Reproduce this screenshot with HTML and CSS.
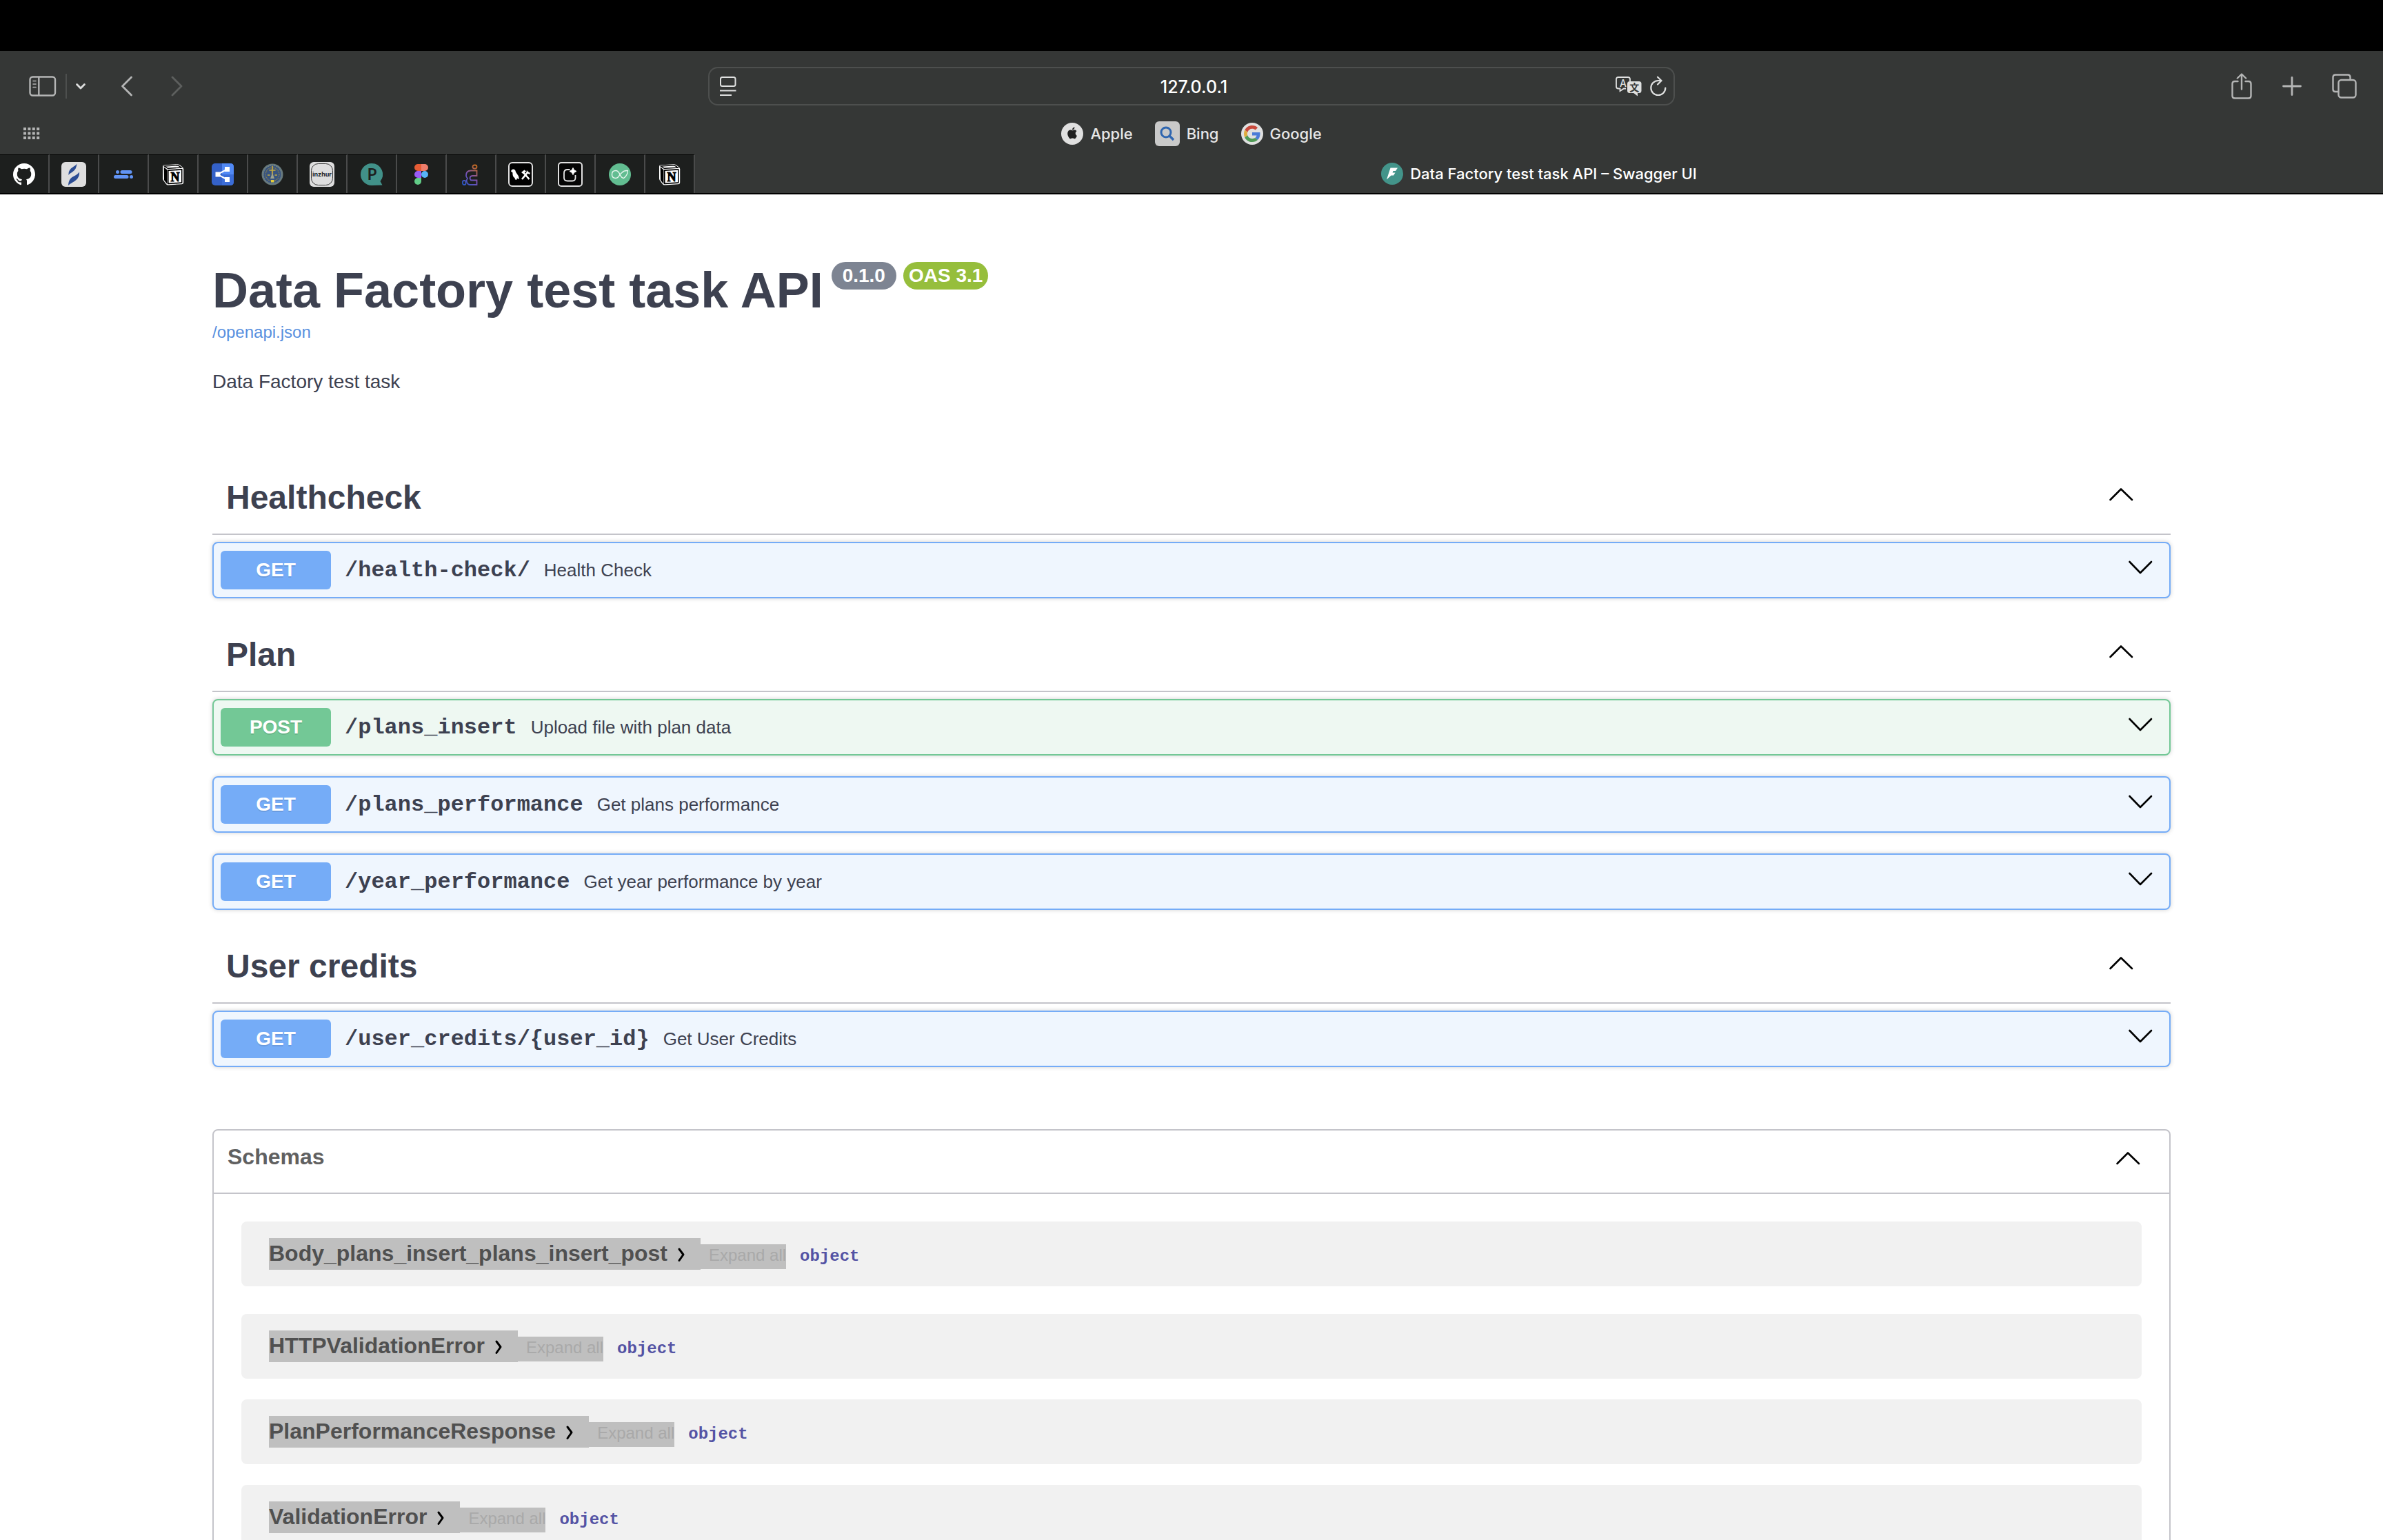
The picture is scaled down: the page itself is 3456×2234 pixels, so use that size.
FILE: index.html
```html
<!DOCTYPE html>
<html lang="en">
<head>
<meta charset="utf-8">
<title>Data Factory test task API - Swagger UI</title>
<link rel="stylesheet" href="styles.css">
</head>
<body>
<svg class="defs" aria-hidden="true">
  <symbol id="up" viewBox="0 0 40 40"><path d="M4.500 23 20 7.500 36 23" fill="none" stroke="#000" stroke-width="2.600" stroke-linecap="round" stroke-linejoin="round"/></symbol>
  <symbol id="down" viewBox="0 0 40 40"><path d="M4.500 8 20 24 36 8" fill="none" stroke="#000" stroke-width="2.600" stroke-linecap="round" stroke-linejoin="round"/></symbol>
  <symbol id="right" viewBox="0 0 48 46"><path d="M17 16 23 24 17 32.500" fill="none" stroke="#000" stroke-width="3" stroke-linecap="round" stroke-linejoin="round"/></symbol>
  <symbol id="notion" viewBox="0 0 32 32">
    <path d="M2.500 2.500 22 1.300q2 0 3.500 1l4.500 3.400q1.200 1 1.200 2.500v19.500q0 2.300-2.300 2.500L9 31.500q-2 0-3.200-1.500L1.800 24.500Q1 23.300 1 22V4.500q0-1.800 1.500-2z" fill="#fff"/>
    <path d="M3.500 4 21.500 2.800q1.700-.1 3 .8l3.500 2.500-18.800 1.100q-1.300.1-2.300-.8z" fill="#fff" stroke="#000" stroke-width="1.400"/>
    <path d="M2.700 5.500 7 9v20.500l-4-5.300zM7.500 9.200l22-1.300v19.800q0 1.300-1.300 1.400L9 30.200q-1.500 0-1.500-1.500z" fill="#000"/>
    <path d="M9.600 11 28 9.800v17.500L9.600 28.500z" fill="#fff"/>
  </symbol>
</svg>

<div class="window">
<header class="chrome">
  <div class="toolbar">
    <div class="tools">
      <button class="icon-btn" aria-label="Sidebar"><svg width="40" height="30" viewBox="0 0 40 30" fill="none" stroke="#b4b5b5" stroke-width="2.400"><rect x="1.500" y="1.500" width="36.500" height="27" rx="4"/><path d="M14.300 2v26"/><path d="M6 7.500h4M6 12h4M6 16.500h4" stroke-width="1.600" stroke-linecap="round"/></svg></button>
      <span class="divider"></span>
      <button class="icon-btn" aria-label="Tab groups"><svg width="14" height="36" viewBox="0 0 14 36" fill="none" stroke="#dcdddd" stroke-width="2.800" stroke-linecap="round" stroke-linejoin="round"><path d="M1.600 15.500 7 21l5.400-5.500"/></svg></button>
      <button class="icon-btn back" aria-label="Back"><svg width="18" height="30" viewBox="0 0 18 30" fill="none" stroke="#b4b5b5" stroke-width="2.800" stroke-linecap="round" stroke-linejoin="round"><path d="M15.500 2 2.500 15l13 13"/></svg></button>
      <button class="icon-btn forward" aria-label="Forward"><svg width="18" height="30" viewBox="0 0 18 30" fill="none" stroke="#5d5f5e" stroke-width="2.800" stroke-linecap="round" stroke-linejoin="round"><path d="M2 2l13 13L2 28"/></svg></button>
    </div>
    <div class="address">
      <svg width="24" height="30" viewBox="0 0 24 30" fill="none" stroke="#dfe0e0" stroke-width="2"><rect x="1" y="2" width="21.500" height="13" rx="2.500"/><path d="M0 21.500h23.500M0 28h17"/></svg>
      <input type="text" value="127.0.0.1" aria-label="Address">
      <button class="icon-btn" aria-label="Translate"><svg width="38" height="30" viewBox="0 0 38 30"><path d="M15 18.500h-3L6.500 22v-3.500H4Q1 18.500 1 15.500V5q0-3 3-3h14q3 0 3 3v3" fill="none" stroke="#dfe0e0" stroke-width="1.800"/><rect x="17" y="8" width="20.500" height="17" rx="3.500" fill="#dfe0e0"/><path d="M25 24h7v5.500z" fill="#dfe0e0"/><text x="11" y="15.500" font-family="Inter, sans-serif" font-size="14" text-anchor="middle" fill="#dfe0e0">A</text><text x="27.200" y="22" font-family="Noto Sans CJK SC, sans-serif" font-weight="700" font-size="14" text-anchor="middle" fill="#353736">文</text></svg></button>
      <button class="icon-btn" aria-label="Reload"><svg width="24" height="30" viewBox="0 0 24 30" fill="none" stroke="#dfe0e0" stroke-width="2.200" stroke-linecap="round" stroke-linejoin="round"><path d="M22.300 17.500A10.500 10.500 0 1 1 11.800 7h4.500"/><path d="m11 1.700 5.500 5.300-5.500 5.500"/></svg></button>
    </div>
    <div class="actions">
      <button class="icon-btn" aria-label="Share"><svg width="30" height="38" viewBox="0 0 30 38" fill="none" stroke="#b4b5b5" stroke-width="2.400" stroke-linecap="round" stroke-linejoin="round"><path d="M9.500 12H5q-3.500 0-3.500 3.500v17.500q0 3.500 3.500 3.500h20q3.500 0 3.500-3.500V15.500q0-3.500-3.500-3.500h-4.500M15 23.500V2M8.800 7.500 15 1.500l6.200 6"/></svg></button>
      <button class="icon-btn" aria-label="New tab"><svg width="28" height="28" viewBox="0 0 28 28" stroke="#b4b5b5" stroke-width="2.800" stroke-linecap="round"><path d="M14 1.500v25M1.500 14h25"/></svg></button>
      <button class="icon-btn" aria-label="Tab overview"><svg width="36" height="36" viewBox="0 0 36 36" fill="none" stroke="#b4b5b5" stroke-width="2.400"><rect x="9.500" y="9" width="25" height="25.500" rx="4"/><path d="M9 26H5q-3.500 0-3.500-3.500V5Q1.500 1.500 5 1.500h18q3.500 0 3.500 3.500v3"/></svg></button>
    </div>
  </div>

  <nav class="bookmarks" aria-label="Favourites">
    <button class="icon-btn grid-btn" aria-label="All favourites"><svg width="24" height="18" viewBox="0 0 24 18" fill="#b4b5b5"><path d="M0 0h4v4H0zM6.400 0h4v4h-4zM12.800 0h4v4h-4zM19.200 0h4v4h-4zM0 6.500h4v4H0zM6.400 6.500h4v4h-4zM12.800 6.500h4v4h-4zM19.200 6.500h4v4h-4zM0 13h4v4H0zM6.400 13h4v4h-4zM12.800 13h4v4h-4zM19.200 13h4v4h-4z"/></svg></button>
    <div class="marks">
      <a href="#apple"><svg width="32" height="32" viewBox="0 0 32 32"><circle cx="16" cy="16" r="16" fill="#e0e0e0"/><path transform="translate(7.700 6.500) scale(.7)" fill="#1f1f1f" d="M12.152 6.896c-.948 0-2.415-1.078-3.960-1.040-2.040.027-3.910 1.183-4.961 3.014-2.117 3.675-.546 9.103 1.519 12.090 1.013 1.454 2.208 3.090 3.792 3.039 1.520-.065 2.090-.987 3.935-.987 1.831 0 2.350.987 3.960.948 1.637-.026 2.676-1.480 3.676-2.948 1.156-1.688 1.636-3.325 1.662-3.415-.039-.013-3.182-1.221-3.220-4.857-.026-3.040 2.480-4.494 2.597-4.559-1.429-2.090-3.623-2.324-4.390-2.376-2-.156-3.675 1.090-4.610 1.090zM15.530 3.830c.843-1.012 1.400-2.427 1.245-3.830-1.207.052-2.662.805-3.532 1.818-.780.896-1.454 2.338-1.273 3.714 1.338.104 2.715-.688 3.559-1.701"/></svg>Apple</a>
      <a href="#bing"><svg width="36" height="36" viewBox="0 0 36 36"><rect width="36" height="36" rx="6" fill="#c9c9c9"/><circle cx="16" cy="16" r="7" fill="none" stroke="#2f66b0" stroke-width="3"/><path d="m21 21 6 6" stroke="#2f66b0" stroke-width="3.400"/></svg>Bing</a>
      <a href="#google"><svg width="32" height="32" viewBox="0 0 32 32"><circle cx="16" cy="16" r="16" fill="#e0e0e0"/><g transform="translate(4 4) scale(.5)"><path fill="#c9493c" d="M24 9.500c3.540 0 6.710 1.220 9.210 3.600l6.850-6.850C35.900 2.380 30.470 0 24 0 14.620 0 6.510 5.380 2.560 13.220l7.980 6.190C12.430 13.720 17.740 9.500 24 9.500z"/><path fill="#4a7bd8" d="M46.980 24.550c0-1.570-.15-3.090-.38-4.550H24v9.020h12.940c-.58 2.960-2.260 5.480-4.780 7.180l7.730 6c4.510-4.180 7.090-10.360 7.090-17.650z"/><path fill="#e0ac3d" d="M10.530 28.590c-.48-1.450-.76-2.990-.76-4.590s.27-3.140.76-4.590l-7.980-6.190C.92 16.460 0 20.120 0 24c0 3.880.92 7.540 2.560 10.780l7.970-6.190z"/><path fill="#4f9a55" d="M24 48c6.480 0 11.930-2.130 15.890-5.810l-7.730-6c-2.150 1.450-4.920 2.300-8.160 2.300-6.260 0-11.570-4.220-13.470-9.910l-7.980 6.190C6.510 42.620 14.620 48 24 48z"/></g></svg>Google</a>
    </div>
  </nav>

  <div class="tabs">
    <button class="tab" aria-label="GitHub"><svg width="32" height="32" viewBox="0 0 16 16"><path fill="#fff" d="M8 0C3.580 0 0 3.580 0 8c0 3.540 2.290 6.530 5.470 7.590.4.070.55-.17.55-.38 0-.19-.01-.82-.01-1.490-2.010.37-2.530-.49-2.690-.94-.09-.23-.48-.94-.82-1.130-.28-.15-.68-.52-.01-.53.63-.01 1.080.58 1.230.82.72 1.210 1.870.87 2.330.66.070-.52.280-.87.510-1.070-1.780-.2-3.640-.89-3.640-3.950 0-.87.31-1.590.82-2.150-.08-.2-.36-1.020.08-2.120 0 0 .67-.21 2.200.82.64-.18 1.320-.27 2-.27s1.360.09 2 .27c1.530-1.040 2.200-.82 2.200-.82.44 1.100.16 1.920.08 2.120.51.56.82 1.270.82 2.150 0 3.070-1.870 3.750-3.650 3.950.29.25.54.73.54 1.480 0 1.070-.01 1.930-.01 2.200 0 .21.15.46.55.38A8.010 8.010 0 0 0 16 8c0-4.420-3.580-8-8-8z"/></svg></button>
    <button class="tab" aria-label="Feather"><svg width="36" height="36" viewBox="0 0 36 36"><rect width="36" height="36" rx="6" fill="#dedede"/><path d="M22.500 2.500C22 8 20 12 16 14.500c-2 1.200-4.500 2.500-5.500 4.500-.5-5 1.500-8.500 6-11.500 2.500-1.600 4.500-3 6-5zM26 14.500c.5 6-2 10-7 13.500-3 2-6 3-9 6 .5-6 2-10 6.500-12.500 3.500-2 7.500-3.500 9.500-7z" fill="#2b4c93"/></svg></button>
    <button class="tab" aria-label="Bars"><svg width="32" height="32" viewBox="0 0 32 32" fill="#6294f5"><circle cx="7.500" cy="12.500" r="2.500"/><rect x="11.500" y="10" width="17" height="5" rx="2.500"/><rect x="2" y="17" width="21.500" height="5" rx="2.500"/><circle cx="27.500" cy="19.500" r="2.500"/></svg></button>
    <button class="tab" aria-label="Notion"><svg width="32" height="32"><use href="#notion"/><text class="notion-n" x="19" y="25.500">N</text></svg></button>
    <button class="tab" aria-label="Graph"><svg width="32" height="32" viewBox="0 0 32 32"><rect width="32" height="32" rx="5" fill="#3461c8"/><path d="M15 0h12q5 0 5 5v11H15z" fill="#5189f5"/><path d="M15 16h17v11q0 5-5 5H15z" fill="#3b6dd8"/><path d="M22.500 8.500 8.500 16l14 7.500" fill="none" stroke="#fff" stroke-width="2"/><path d="M5.500 12.500h7v7h-7zM19 5h7v7h-7zM19 20h7v7h-7z" fill="#fff"/></svg></button>
    <button class="tab" aria-label="Court"><svg width="32" height="32" viewBox="0 0 32 32"><circle cx="16" cy="16" r="15.500" fill="#687a7c"/><circle cx="16" cy="16" r="13" fill="#38547f" stroke="#6f8088" stroke-width="1.200" stroke-dasharray="2 1"/><circle cx="16" cy="16" r="9.800" fill="none" stroke="#7d7a55" stroke-width="1.600" stroke-dasharray="1.500 1"/><path d="M16 4v14" stroke="#b39b46" stroke-width="2.200"/><path d="M11.500 10h9M9 17h3.500M19.500 17H23" stroke="#c4ac3f" stroke-width="1.500"/><path d="m16 14 3 8h-6z" fill="#a0a48d"/><path d="M14 24h4.500v3.500H14z" fill="#e3ca38"/></svg></button>
    <button class="tab" aria-label="Inzhur"><svg width="36" height="36" viewBox="0 0 36 36"><rect width="36" height="36" rx="6" fill="#dedede"/><rect x="2.500" y="2.500" width="31" height="31" rx="10" fill="none" stroke="#333" stroke-width="1"/><path d="M4 13h28v10H4z" fill="#dedede"/><text x="18" y="21" font-family="Inter, sans-serif" font-weight="700" font-size="9" text-anchor="middle" fill="#1b1b1b">inzhur</text></svg></button>
    <button class="tab" aria-label="P chat"><svg width="32" height="32" viewBox="0 0 32 32"><path d="M16 0a16 16 0 0 1 12.500 26l3 5.500L16 32a16 16 0 0 1 0-32z" fill="#419189"/><text x="16.500" y="24" font-family="Lato, sans-serif" font-weight="700" font-size="22" text-anchor="middle" fill="#1d1f1e">P</text></svg></button>
    <button class="tab" aria-label="Figma"><svg width="32" height="32" viewBox="0 0 32 32"><path d="M11 1h5v10h-5a5 5 0 0 1 0-10z" fill="#e55c35"/><path d="M16 1h5a5 5 0 0 1 0 10h-5z" fill="#ee7d6b"/><path d="M11 11h5v10h-5a5 5 0 0 1 0-10z" fill="#9a5cf5"/><circle cx="21" cy="16" r="5" fill="#57b5f8"/><path d="M11 21h5v5a5 5 0 1 1-5-5z" fill="#62cd87"/></svg></button>
    <button class="tab" aria-label="Snake"><svg width="32" height="32" viewBox="0 0 32 32" fill="none" stroke-width="1.800"><defs><linearGradient id="sn" gradientUnits="userSpaceOnUse" x1="4" y1="30" x2="25" y2="6"><stop offset="0" stop-color="#2857c4"/><stop offset=".5" stop-color="#7a52b8"/><stop offset="1" stop-color="#c46a22"/></linearGradient></defs><g stroke="url(#sn)"><rect x="18.500" y="2.500" width="6" height="5" rx="2.500"/><rect x="4" y="25" width="4.500" height="6" rx="2"/><path d="M24.500 10.500H16q-7 0-7 7 0 3 2 4l-1.500 3.500q1 6 5 6h10v-6.500H16l-1.500-2.500q0-4 4-4h6z"/></g></svg></button>
    <button class="tab" aria-label="LangChain"><svg width="36" height="36" viewBox="0 0 36 36"><rect x="1" y="1" width="34" height="34" rx="5" fill="#000" stroke="#e0e0e0" stroke-width="2"/><path d="M4 13.500q1-3.500 4-3 2.500.5 3 4l4 6 1 4.500-3.500-1.500.5 2h-3l-.5-2.500q-3.500-1.500-3-7.500z" fill="#fff"/><path d="m20 25 9-11M21 14l9.500 11" stroke="#fff" stroke-width="2.600"/><path d="m19 15 4.500-3.500 2.500 2-4 4zM27 11.500l1.500 3.500 3.500.5-1 2.500-4.500-2.500z" fill="#fff"/></svg></button>
    <button class="tab" aria-label="Generator"><svg width="36" height="36" viewBox="0 0 36 36"><rect x="1" y="1" width="34" height="34" rx="4" fill="#050505" stroke="#e0e0e0" stroke-width="2"/><path d="M17.500 11H14q-5 0-5 5v7q0 4.500 5 4.500h7q4.500 0 4.500-4.500v-4" fill="none" stroke="#e6e6e6" stroke-width="1.800"/><path d="M22 8.500q1 4 5 5-4 1-5 5-1-4-5-5 4-1 5-5z" fill="#fff" stroke="#fff"/></svg></button>
    <button class="tab" aria-label="Infinity"><svg width="32" height="32" viewBox="0 0 32 32"><circle cx="16" cy="16" r="16" fill="#62bd91"/><path d="M16 16q-2.500 5.500-6 5.500-5.500 0-5.500-5.500T10 10.500q3.500 0 6 5.500 2.500 5.500 5.500 5.500 6-4.500 6-11-5.500-.5-8 2.500z" fill="none" stroke="#e6f6ee" stroke-width="1.400" stroke-linejoin="round"/></svg></button>
    <button class="tab" aria-label="Notion workspace"><svg width="32" height="32"><use href="#notion"/><text class="notion-n" x="19" y="25.500">N</text></svg></button>
    <button class="tab-active"><svg width="32" height="32" viewBox="0 0 32 32"><circle cx="16" cy="16" r="16" fill="#43948a"/><path d="M13.500 7.500h10.500L21 12h-3.500l-1 2.500h4L18 18.500h-3.500L8 24.500z" fill="#fff"/></svg>Data Factory test task API – Swagger UI</button>
  </div>
</header>

<main class="page">
  <div class="content">
    <section class="info">
      <div class="title-row">
        <h1>Data Factory test task API</h1>
        <span class="badge version">0.1.0</span>
        <span class="badge oas">OAS 3.1</span>
      </div>
      <a class="spec" href="/openapi.json">/openapi.json</a>
      <p>Data Factory test task</p>
    </section>

    <section class="group">
      <div class="group-head"><h2>Healthcheck</h2><button class="icon-btn" aria-label="Collapse Healthcheck"><svg width="40" height="40"><use href="#up"/></svg></button></div>
      <button class="op get"><span class="method">GET</span><span class="path">/health-check/</span><span class="desc">Health Check</span><svg width="40" height="40"><use href="#down"/></svg></button>
    </section>

    <section class="group">
      <div class="group-head"><h2>Plan</h2><button class="icon-btn" aria-label="Collapse Plan"><svg width="40" height="40"><use href="#up"/></svg></button></div>
      <button class="op post"><span class="method">POST</span><span class="path">/plans_insert</span><span class="desc">Upload file with plan data</span><svg width="40" height="40"><use href="#down"/></svg></button>
      <button class="op get"><span class="method">GET</span><span class="path">/plans_performance</span><span class="desc">Get plans performance</span><svg width="40" height="40"><use href="#down"/></svg></button>
      <button class="op get"><span class="method">GET</span><span class="path">/year_performance</span><span class="desc">Get year performance by year</span><svg width="40" height="40"><use href="#down"/></svg></button>
    </section>

    <section class="group">
      <div class="group-head"><h2>User credits</h2><button class="icon-btn" aria-label="Collapse User credits"><svg width="40" height="40"><use href="#up"/></svg></button></div>
      <button class="op get"><span class="method">GET</span><span class="path">/user_credits/{user_id}</span><span class="desc">Get User Credits</span><svg width="40" height="40"><use href="#down"/></svg></button>
    </section>

    <section class="schemas">
      <div class="schemas-head"><h3>Schemas</h3><button class="icon-btn" aria-label="Collapse Schemas"><svg width="40" height="40"><use href="#up"/></svg></button></div>
      <article class="model"><button class="name">Body_plans_insert_plans_insert_post<svg width="48" height="46"><use href="#right"/></svg></button><button class="expand">Expand all</button><strong>object</strong></article>
      <article class="model"><button class="name">HTTPValidationError<svg width="48" height="46"><use href="#right"/></svg></button><button class="expand">Expand all</button><strong>object</strong></article>
      <article class="model"><button class="name">PlanPerformanceResponse<svg width="48" height="46"><use href="#right"/></svg></button><button class="expand">Expand all</button><strong>object</strong></article>
      <article class="model"><button class="name">ValidationError<svg width="48" height="46"><use href="#right"/></svg></button><button class="expand">Expand all</button><strong>object</strong></article>
    </section>
  </div>
</main>
</div>
</body>
</html>
```
FILE: styles.css
```css
* { box-sizing: border-box; }
body { margin: 0; background: #fff; color: #3d4150; font-family: "Liberation Sans", Arial, sans-serif; }
h1, h2, h3, p { margin: 0; }
button { margin: 0; padding: 0; border: 0; background: none; color: inherit; font: inherit; text-align: left; }
a { text-decoration: none; }
svg { display: block; flex: none; }
.defs { position: absolute; width: 0; height: 0; }

.window { display: flex; flex-direction: column; height: 100vh; overflow: hidden; }

/* Browser frame */
.chrome { flex: none; border-top: 74px solid #000; background: #353736; color: #e6e6e6; font: 500 22px/28px Inter, sans-serif; }
.toolbar { display: grid; grid-template-columns: 1fr minmax(0, 1402px) 1fr; align-items: center; height: 102px; padding: 0 38px; }
.tools { display: flex; align-items: center; gap: 13px; padding-left: 4px; }
.divider { width: 2px; height: 36px; background: #4d4f4e; }
.back { margin-left: 38px; }
.forward { margin-left: 42px; }
.address { display: flex; align-items: center; gap: 12px; height: 56px; padding: 0 10px 0 15px; border: 2px solid #4d4f4e; border-radius: 14px; }
.address input { flex: 1; min-width: 0; padding: 2px 0 0 52px; border: 0; background: none; color: #fff; font: 500 25px/30px Inter, sans-serif; text-align: center; }
.actions { display: flex; align-items: center; justify-content: flex-end; gap: 44px; }

.bookmarks { display: grid; grid-template-columns: 1fr auto 1fr; align-items: center; height: 48px; padding: 0 34px 12px; }
.marks { display: flex; gap: 32px; }
.marks a { display: flex; align-items: center; gap: 10px; color: inherit; }

.tabs { display: flex; height: 58px; border-bottom: 2px solid #000; }
.tab { display: flex; align-items: center; justify-content: center; width: 72px; border-top: 1px solid #000; border-right: 2px solid #4a4b4b; background: #1d1f1e; }
.tab-active { display: flex; flex: 1; align-items: center; justify-content: center; gap: 10px; color: #fff; }
.notion-n { fill: #000; stroke: #000; stroke-width: 1px; font: 700 18px "Liberation Serif", serif; text-anchor: middle; }

/* Page */
.page { flex: 1; min-height: 0; overflow: hidden; padding: 0 308px; }
.info { padding: 98px 0 100px; }
.title-row { display: flex; align-items: flex-start; gap: 10px; }
h1 { padding-right: 2px; font-size: 72px; line-height: 82px; }
.badge { padding: 0 16px; border-radius: 20px; color: #fff; font-weight: 700; font-size: 28px; line-height: 40px; }
.version { background: #7d8492; }
.oas { padding: 0 8px; background: #96be3c; }
.spec { display: block; margin-top: 6px; color: #5890df; font-size: 24px; line-height: 28px; }
.info p { margin-top: 42px; font-size: 28px; line-height: 32px; }

.group-head { display: flex; align-items: center; justify-content: space-between; margin-bottom: 10px; padding: 24px 52px 24px 20px; border-bottom: 2px solid #c4c4ca; }
h2 { font-size: 48px; line-height: 56px; }
.op { display: flex; align-items: center; width: 100%; margin-bottom: 30px; padding: 11px 22px 11px 10px; border: 2px solid; border-radius: 8px; box-shadow: 0 0 6px rgba(0, 0, 0, .19); }
.method { width: 160px; border-radius: 6px; color: #fff; font-weight: 700; font-size: 28px; line-height: 56px; text-align: center; text-shadow: 0 2px 0 rgba(0, 0, 0, .1); }
.path { padding: 2px 20px 0; font: 700 32px/40px "Liberation Mono", "Courier New", monospace; }
.desc { flex: 1; font-size: 26px; line-height: 40px; }
.get { border-color: #75acf7; background: #eff6fe; }
.get .method { background: #75acf7; }
.post { border-color: #73c896; background: #eef8f2; }
.post .method { background: #73c896; }

.schemas { margin-top: 90px; border: 2px solid #c4c4ca; border-radius: 8px; }
.schemas-head { display: flex; align-items: center; justify-content: space-between; height: 92px; padding: 20px 40px 20px 20px; border-bottom: 2px solid #c4c4ca; color: #606060; }
h3 { align-self: flex-start; font-size: 32px; line-height: 36px; }
.model { display: flex; align-items: baseline; margin: 0 40px 30px; padding: 24px 40px; border-radius: 8px; background: #f1f1f1; }
.schemas-head + .model { margin: 40px; }
.name { display: flex; height: 46px; background: #bfbfbf; color: #505050; font-weight: 700; font-size: 32px; line-height: 44px; }
.expand { padding: 0 0 4px 12px; background: #bfbfbf; color: #a9a9a9; font-size: 24px; line-height: 32px; }
.model strong { margin-left: 20px; color: #5453a4; font: 700 24px/32px "Liberation Mono", "Courier New", monospace; }
```
